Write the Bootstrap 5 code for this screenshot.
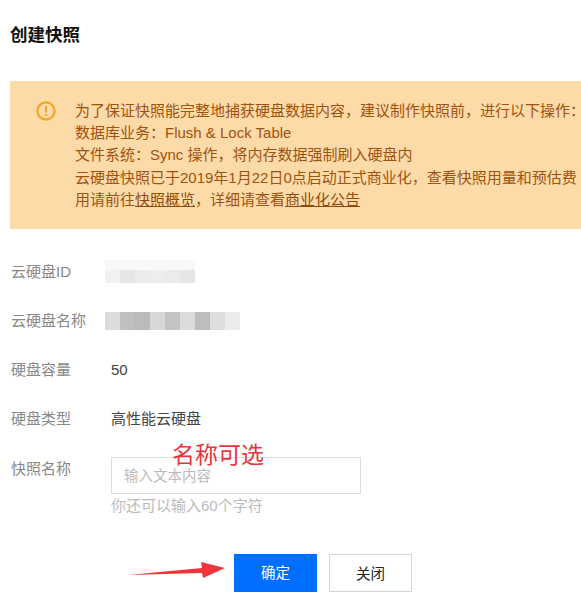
<!DOCTYPE html>
<html lang="zh"><head><meta charset="utf-8"><title>创建快照</title>
<link rel="stylesheet" href="https://cdn.jsdelivr.net/npm/bootstrap@5.3.0/dist/css/bootstrap.min.css">
<style>
html,body{height:612px;overflow:hidden}
body{font-family:"Liberation Sans","Noto Sans CJK SC",sans-serif;background:#fff;position:relative;color:#333}
.snap-title{font-size:17.5px;font-weight:700;line-height:22px;margin:24px 0 35px 10px;color:#111}
.snap-alert{margin-left:10px;height:148px;background:#fddba8;padding:19px 0 0 26px;color:#a0520f;font-size:15px;line-height:22.2px;gap:19px;white-space:nowrap}
.snap-alert a{color:#8f4a10}
.snap-icon{width:20px;height:20px;flex:none;margin-top:1px}
.snap-form{padding:32px 0 0 11px;font-size:15px}
.snap-row{height:49px;line-height:22px}
.snap-label{width:100px;flex:none;color:#888}
.snap-label-low{margin-top:1px}
.snap-value{color:#444}
.mosaic{height:18px;margin-left:-6px;margin-top:2px}
.mosaic-id{height:23px;margin-top:-1px}
.mosaic span{display:block;width:15px;height:100%}
.mosaic-id span{box-shadow:inset 0 10px 0 #f8f8f8}
.snap-input{width:250px;height:37px;border:1px solid #ddd;padding:0 12px;font-size:14.5px;background:#fff;color:#333;border-radius:0;margin-left:0}
.snap-input::placeholder{color:#bbb}
.snap-help{color:#bbb;font-size:15px;line-height:22px;margin-top:1px}
.snap-actions{margin-top:37px;padding-left:234px;gap:12px}
.snap-btn{width:83px;height:38px;border-radius:0;font-size:14.5px;padding:0;line-height:38px}
.snap-ok{background:#006eff;border:0;color:#fff}
.snap-close{background:#fff;border:1px solid #d5d5d5;color:#222}
.note-text{position:absolute;left:172px;top:439px;font-size:23px;line-height:32px;color:#e8353d;white-space:nowrap}
.note-arrow{position:absolute;left:127px;top:558px}
</style></head><body>
<h1 class="snap-title">创建快照</h1>
<div class="snap-alert d-flex">
<svg class="snap-icon" viewBox="0 0 20 20"><circle cx="10" cy="10" r="8.6" fill="none" stroke="#f0a61f" stroke-width="2.2"/><rect x="9" y="5" width="2" height="6.5" fill="#f0a61f"/><rect x="9" y="13" width="2" height="2" fill="#f0a61f"/></svg>
<div>为了保证快照能完整地捕获硬盘数据内容，建议制作快照前，进行以下操作：<br>数据库业务：Flush &amp; Lock Table<br>文件系统：Sync 操作，将内存数据强制刷入硬盘内<br>云硬盘快照已于2019年1月22日0点启动正式商业化，查看快照用量和预估费<br>用请前往<a href="#">快照概览</a>，详细请查看<a href="#">商业化公告</a></div>
</div>
<div class="snap-form">
<div class="snap-row d-flex"><div class="snap-label">云硬盘ID</div><div class="mosaic mosaic-id d-flex"><span style="background:#f1f1f1"></span><span style="background:#e6e6e6"></span><span style="background:#ececec"></span><span style="background:#eee"></span><span style="background:#ebebeb"></span><span style="background:#e6e6e6"></span></div></div>
<div class="snap-row d-flex"><div class="snap-label">云硬盘名称</div><div class="mosaic d-flex"><span style="background:#dcdcdc"></span><span style="background:#bfbfbf"></span><span style="background:#bbb"></span><span style="background:#d8d8d8"></span><span style="background:#c4c4c4"></span><span style="background:#dcdcdc"></span><span style="background:#bdbdbd"></span><span style="background:#dedede"></span><span style="background:#ececec"></span></div></div>
<div class="snap-row d-flex"><div class="snap-label">硬盘容量</div><div class="snap-value">50</div></div>
<div class="snap-row d-flex"><div class="snap-label">硬盘类型</div><div class="snap-value">高性能云硬盘</div></div>
<div class="d-flex"><div class="snap-label snap-label-low">快照名称</div><div><input class="snap-input d-block" placeholder="输入文本内容"><div class="snap-help">你还可以输入60个字符</div></div></div>
</div>
<div class="snap-actions d-flex"><button class="btn snap-btn snap-ok">确定</button><button class="btn snap-btn snap-close">关闭</button></div>
<div class="note-text">名称可选</div>
<svg class="note-arrow note-svg" width="100" height="24" viewBox="0 0 100 24"><path d="M1 17 L75 10 L74 4 L98 10 L76 20 L75 15 Z" fill="#f0353a"/></svg>
<script src="https://cdn.jsdelivr.net/npm/bootstrap@5.3.0/dist/js/bootstrap.bundle.min.js"></script>
</body></html>
